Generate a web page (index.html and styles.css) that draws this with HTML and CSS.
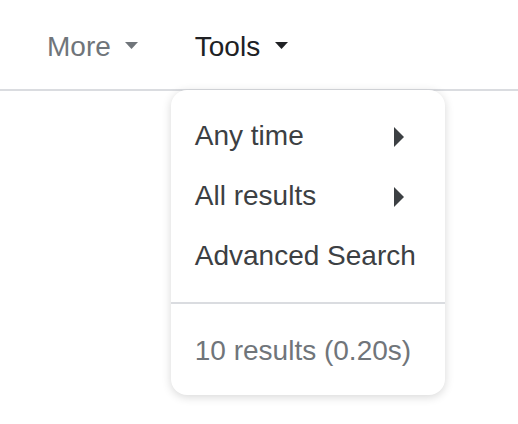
FILE: index.html
```html
<!DOCTYPE html>
<html lang="en">
<head>
<meta charset="utf-8">
<title>Tools menu</title>
<link rel="stylesheet" href="styles.css">
</head>
<body>
  <header class="tabs">
    <div class="tab tab-more">
      <span>More</span>
      <svg class="caret" width="13" height="7" viewBox="0 0 13 7"><path d="M0 0h13L6.5 7z" fill="#70757a"/></svg>
    </div>
    <div class="tab tab-tools">
      <span>Tools</span>
      <svg class="caret" width="13" height="7" viewBox="0 0 13 7"><path d="M0 0h13L6.5 7z" fill="#202124"/></svg>
      <div class="menu">
        <div class="menu-item">
          <span>Any time</span>
          <svg class="arrow" width="10" height="20" viewBox="0 0 10 20"><path d="M0 0L10 10L0 20z" fill="#3c4043"/></svg>
        </div>
        <div class="menu-item">
          <span>All results</span>
          <svg class="arrow" width="10" height="20" viewBox="0 0 10 20"><path d="M0 0L10 10L0 20z" fill="#3c4043"/></svg>
        </div>
        <div class="menu-item">
          <span>Advanced Search</span>
        </div>
        <div class="divider"></div>
        <div class="menu-stats">10 results (0.20s)</div>
      </div>
    </div>
  </header>
</body>
</html>
```

FILE: styles.css
```css
html, body {
  margin: 0;
  padding: 0;
  background: #fff;
}

body {
  font-family: "Liberation Sans", Arial, sans-serif;
  font-size: 28px;
  width: 518px;
  height: 424px;
  overflow: hidden;
}

.tabs {
  display: flex;
  align-items: flex-start;
  height: 89px;
  border-bottom: 2px solid #dadce0;
  box-sizing: content-box;
  padding-left: 47px;
  gap: 57px;
}

.tab {
  position: relative;
  display: flex;
  align-items: center;
  margin-top: 27px;
  line-height: 40px;
}

.tab-more {
  color: #70757a;
}

.tab-more .caret {
  margin-left: 14px;
  margin-top: -4px;
}

.tab-tools {
  color: #202124;
}

.tab-tools .caret {
  margin-left: 15px;
  margin-top: -4px;
}

.menu {
  position: absolute;
  left: -24px;
  top: 63px;
  width: 274px;
  height: 305px;
  box-sizing: border-box;
  padding-top: 16px;
  background: #fff;
  border-radius: 16px;
  box-shadow: 0 2px 10px rgba(0, 0, 0, 0.16);
  color: #3c4043;
  z-index: 2;
}

.menu-item {
  display: flex;
  align-items: center;
  justify-content: space-between;
  height: 60px;
  line-height: 60px;
  padding: 0 41px 0 24px;
  white-space: nowrap;
}

.arrow {
  margin-top: 2px;
}

.divider {
  height: 2px;
  background: #dadce0;
  margin-top: 16px;
}

.menu-stats {
  margin-top: 17px;
  line-height: 60px;
  padding-left: 24px;
  color: #70757a;
  white-space: nowrap;
}
```
